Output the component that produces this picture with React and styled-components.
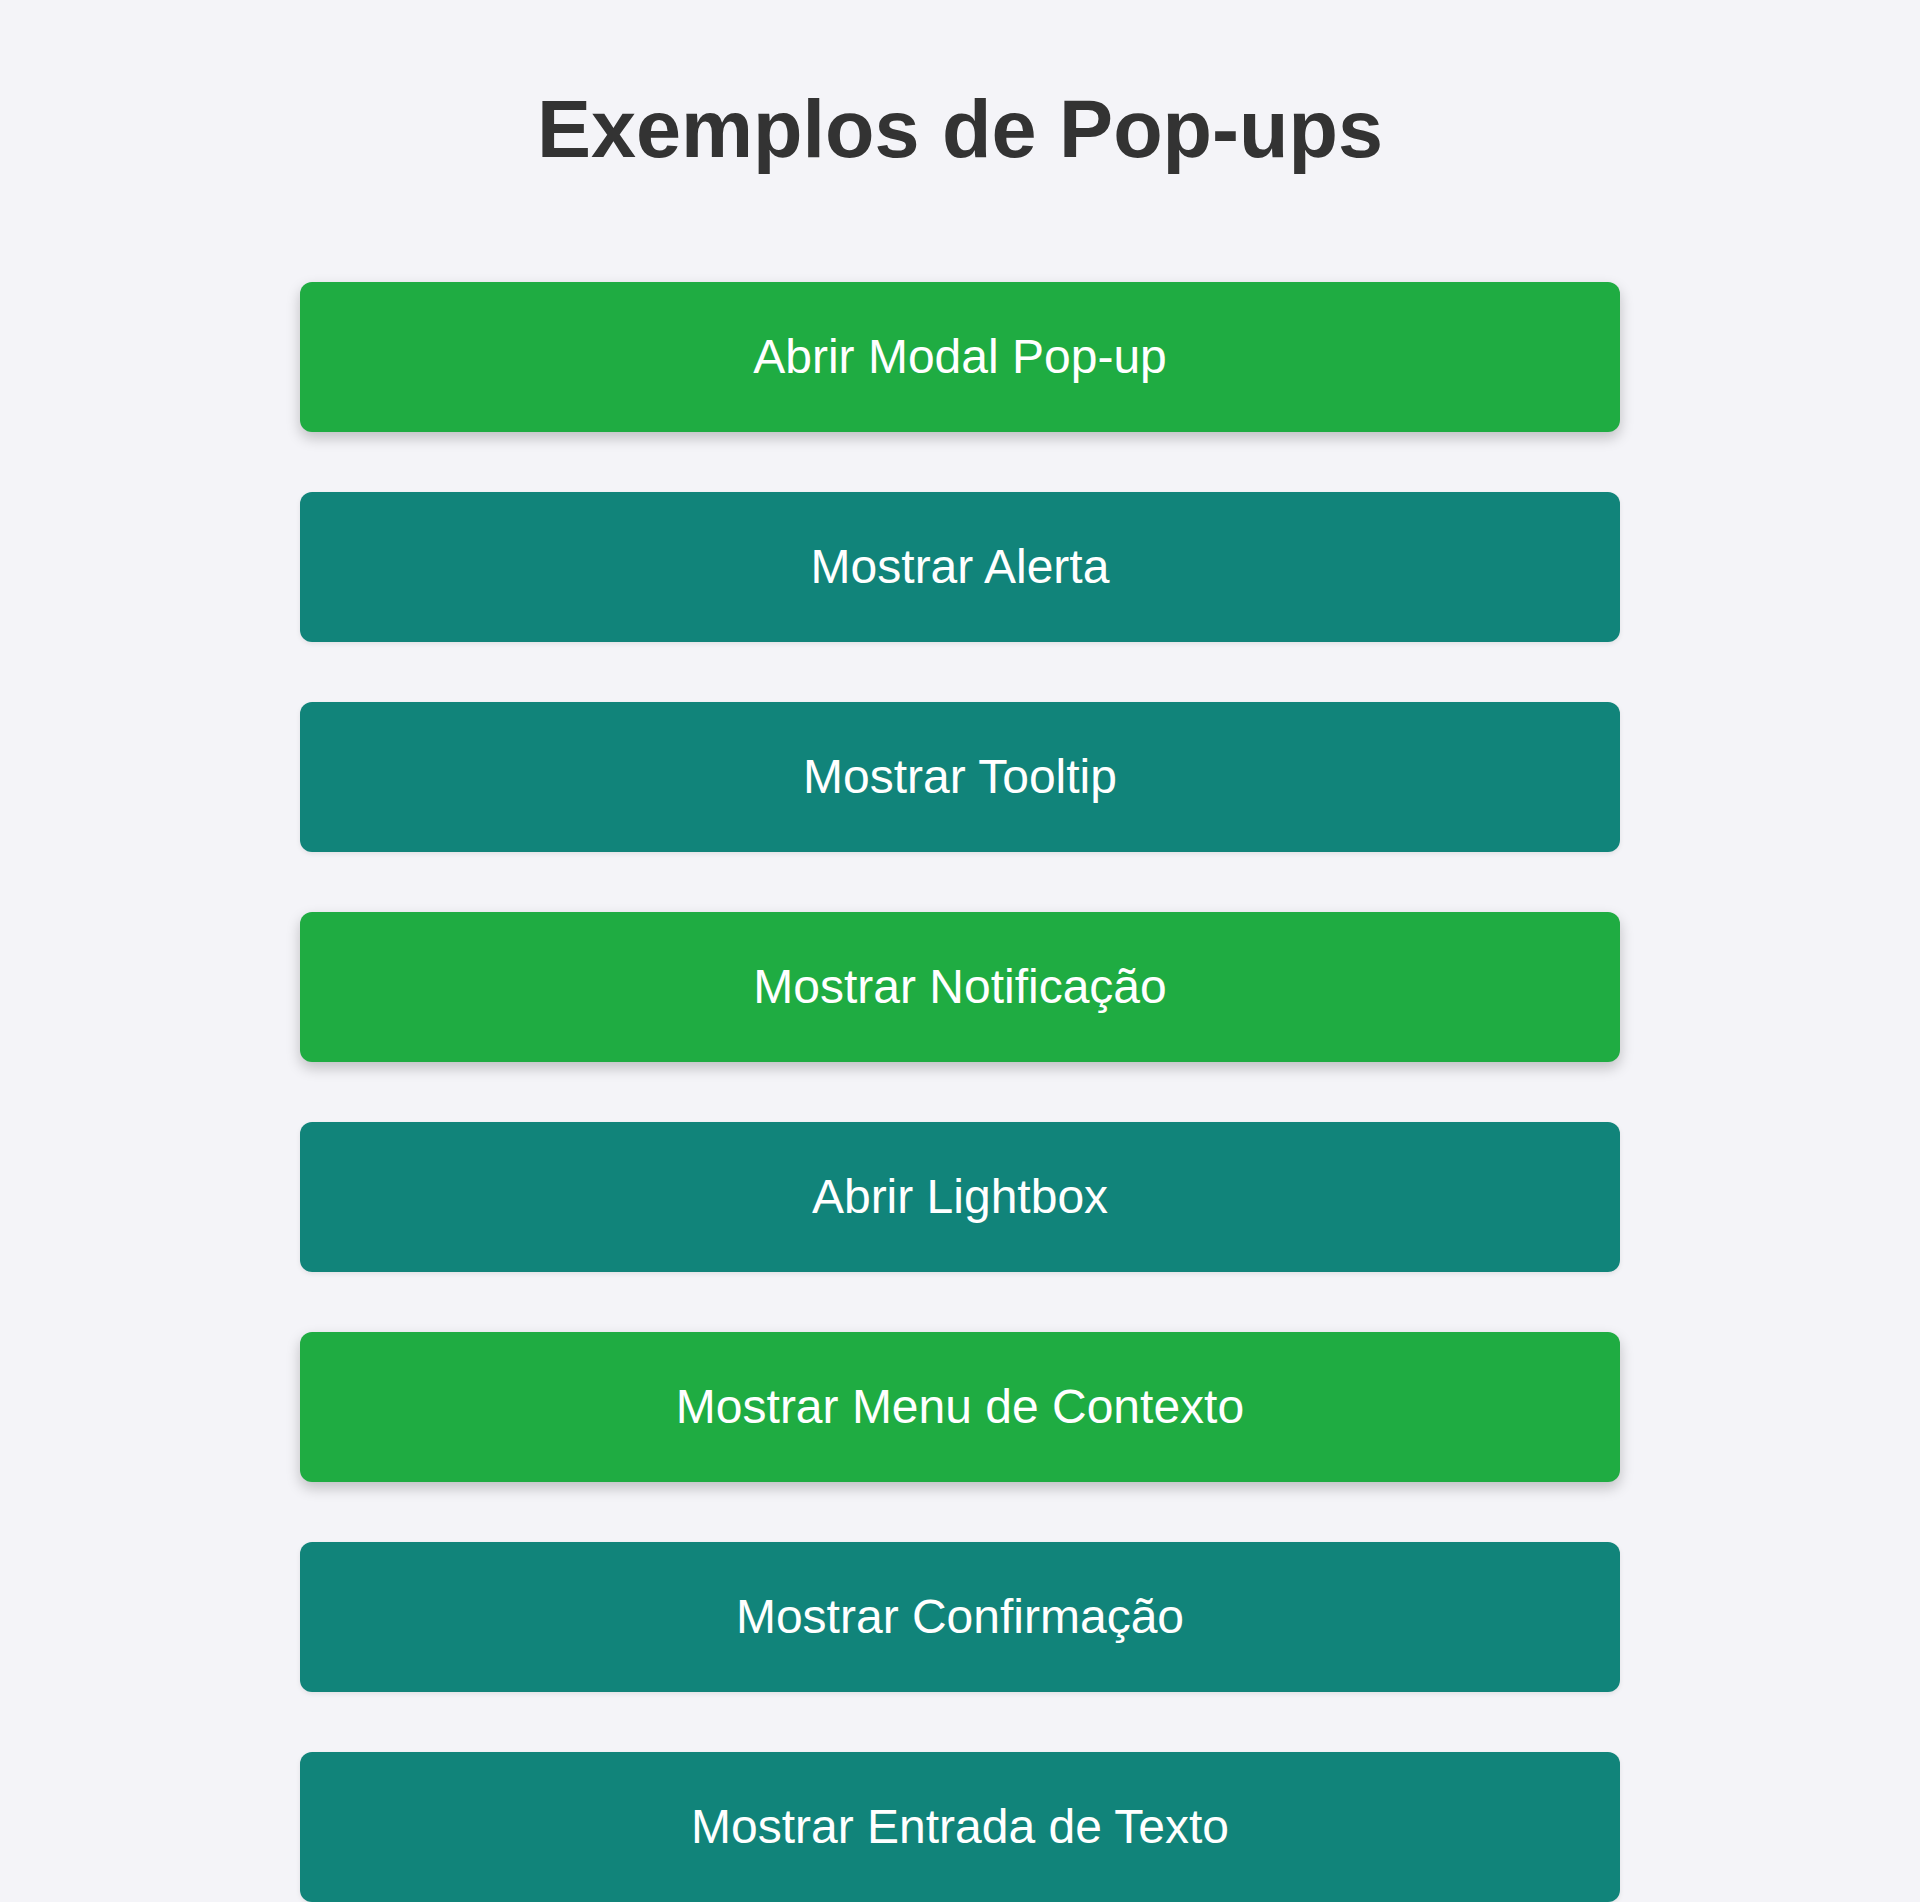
import React from "react";
import styled, { createGlobalStyle } from "styled-components";

const GlobalStyle = createGlobalStyle`
  html, body {
    margin: 0;
    padding: 0;
    background: #f4f4f8;
  }
  body {
    font-family: "Liberation Sans", Arial, sans-serif;
  }
`;

const buttons = [
  { label: "Abrir Modal Pop-up", accent: true },
  { label: "Mostrar Alerta" },
  { label: "Mostrar Tooltip" },
  { label: "Mostrar Notificação", accent: true },
  { label: "Abrir Lightbox" },
  { label: "Mostrar Menu de Contexto", accent: true },
  { label: "Mostrar Confirmação" },
  { label: "Mostrar Entrada de Texto" },
];

const App = () => {
  return (
    <>
      <GlobalStyle />
      <Page>
        <Title>Exemplos de Pop-ups</Title>
        <ButtonList>
          {buttons.map((b) => (
            <PopupButton key={b.label} $accent={b.accent}>
              {b.label}
            </PopupButton>
          ))}
        </ButtonList>
      </Page>
    </>
  );
};

const Page = styled.div`
  display: flex;
  flex-direction: column;
  align-items: center;
  padding-top: 83px;
`;

const Title = styled.h1`
  margin: 0 0 106px;
  font-size: 81px;
  line-height: 93px;
  font-weight: 700;
  color: #333333;
  text-align: center;
`;

const ButtonList = styled.div`
  display: flex;
  flex-direction: column;
  gap: 60px;
  width: 1320px;
`;

const PopupButton = styled.button`
  display: block;
  width: 100%;
  padding: 48px 20px;
  font-family: "Liberation Sans", Arial, sans-serif;
  font-size: 48px;
  line-height: 54px;
  color: #ffffff;
  text-align: center;
  border: none;
  border-radius: 12px;
  cursor: pointer;
  background-color: ${(p) => (p.$accent ? "#1fac42" : "#11847a")};
  box-shadow: ${(p) =>
    p.$accent
      ? "0 6px 14px rgba(0, 0, 0, 0.22)"
      : "0 2px 5px rgba(0, 0, 0, 0.08)"};
`;

export default App;
